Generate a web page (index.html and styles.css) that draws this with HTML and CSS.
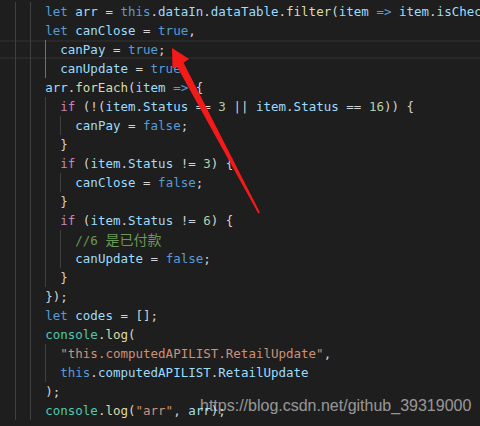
FILE: index.html
```html
<!DOCTYPE html>
<html lang="en">
<head>
    <meta charset="UTF-8">
    <title>canClose / canPay</title>
    <link rel="stylesheet" href="styles.css">
</head>
<body>

    <div class="editor">
        <div class="ln"><span class="ig0">  </span><span class="ig">  </span><span class="ig">  </span><span class="kw">let</span> <span class="vr">arr</span> = <span class="kw">this</span>.<span class="vr">dataIn</span>.<span class="vr">dataTable</span>.<span class="fn">filter</span>(<span class="vr">item</span> <span class="kw">=&gt;</span> <span class="vr">item</span>.<span class="vr">isChecked</span>);</div>
        <div class="ln"><span class="ig0">  </span><span class="ig">  </span><span class="ig">  </span><span class="kw">let</span> <span class="vr">canClose</span> = <span class="kw">true</span>,</div>
        <div class="ln cur"><span class="ig0">  </span><span class="ig">  </span><span class="ig">  </span><span class="ig on">  </span><span class="vr">canPay</span> = <span class="kw">true</span>;</div>
        <div class="ln"><span class="ig0">  </span><span class="ig">  </span><span class="ig">  </span><span class="ig on">  </span><span class="vr">canUpdate</span> = <span class="kw">true</span>;</div>
        <div class="ln"><span class="ig0">  </span><span class="ig">  </span><span class="ig">  </span><span class="vr">arr</span>.<span class="fn">forEach</span>(<span class="vr">item</span> <span class="kw">=&gt;</span> {</div>
        <div class="ln"><span class="ig0">  </span><span class="ig">  </span><span class="ig">  </span><span class="ig">  </span><span class="ct">if</span> (!(<span class="vr">item</span>.<span class="vr">Status</span> == <span class="nm">3</span> || <span class="vr">item</span>.<span class="vr">Status</span> == <span class="nm">16</span>)) {</div>
        <div class="ln"><span class="ig0">  </span><span class="ig">  </span><span class="ig">  </span><span class="ig">  </span><span class="ig">  </span><span class="vr">canPay</span> = <span class="kw">false</span>;</div>
        <div class="ln"><span class="ig0">  </span><span class="ig">  </span><span class="ig">  </span><span class="ig">  </span>}</div>
        <div class="ln"><span class="ig0">  </span><span class="ig">  </span><span class="ig">  </span><span class="ig">  </span><span class="ct">if</span> (<span class="vr">item</span>.<span class="vr">Status</span> != <span class="nm">3</span>) {</div>
        <div class="ln"><span class="ig0">  </span><span class="ig">  </span><span class="ig">  </span><span class="ig">  </span><span class="ig">  </span><span class="vr">canClose</span> = <span class="kw">false</span>;</div>
        <div class="ln"><span class="ig0">  </span><span class="ig">  </span><span class="ig">  </span><span class="ig">  </span>}</div>
        <div class="ln"><span class="ig0">  </span><span class="ig">  </span><span class="ig">  </span><span class="ig">  </span><span class="ct">if</span> (<span class="vr">item</span>.<span class="vr">Status</span> != <span class="nm">6</span>) {</div>
        <div class="ln"><span class="ig0">  </span><span class="ig">  </span><span class="ig">  </span><span class="ig">  </span><span class="ig">  </span><span class="cm">//6 <span class="cjk">是已付款</span></span></div>
        <div class="ln"><span class="ig0">  </span><span class="ig">  </span><span class="ig">  </span><span class="ig">  </span><span class="ig">  </span><span class="vr">canUpdate</span> = <span class="kw">false</span>;</div>
        <div class="ln"><span class="ig0">  </span><span class="ig">  </span><span class="ig">  </span><span class="ig">  </span>}</div>
        <div class="ln"><span class="ig0">  </span><span class="ig">  </span><span class="ig">  </span>});</div>
        <div class="ln"><span class="ig0">  </span><span class="ig">  </span><span class="ig">  </span><span class="kw">let</span> <span class="vr">codes</span> = [];</div>
        <div class="ln"><span class="ig0">  </span><span class="ig">  </span><span class="ig">  </span><span class="cl">console</span>.<span class="fn">log</span>(</div>
        <div class="ln"><span class="ig0">  </span><span class="ig">  </span><span class="ig">  </span><span class="ig">  </span><span class="st">"this.computedAPILIST.RetailUpdate"</span>,</div>
        <div class="ln"><span class="ig0">  </span><span class="ig">  </span><span class="ig">  </span><span class="ig">  </span><span class="kw">this</span>.<span class="vr">computedAPILIST</span>.<span class="vr">RetailUpdate</span></div>
        <div class="ln"><span class="ig0">  </span><span class="ig">  </span><span class="ig">  </span>);</div>
        <div class="ln"><span class="ig0">  </span><span class="ig">  </span><span class="ig">  </span><span class="cl">console</span>.<span class="fn">log</span>(<span class="st">"arr"</span>, <span class="vr">arr</span>);</div>
    </div>

    <!-- red annotation arrow -->
    <svg class="arrow" width="480" height="426" viewBox="0 0 480 426">
        <polygon fill="#f51a1a" points="172,48 189,59 183.5,62.8 259.9,212.6 258.3,213.4 177,66.6 172.5,68.5"/>
    </svg>

    <div class="watermark">https://blog.csdn.net/github_39319000</div>

</body>
</html>
```

FILE: styles.css
```css
body {
    margin: 0;
    padding: 0;
    background: #1e1e1e;
    width: 480px;
    height: 426px;
    overflow: hidden;
    position: relative;
}

.editor {
    padding-top: 2px;
    font-family: 'DejaVu Sans Mono', 'Liberation Mono', monospace;
    font-size: 12.5px;
    line-height: 19px;
    color: #d4d4d4;
}

.ln {
    height: 19px;
    white-space: pre;
    overflow: hidden;
}

/* current line */
.cur {
    box-shadow: inset 0 2px 0 #282828, inset 0 -2px 0 #282828;
}

/* indent guides */
.ig0,
.ig {
    display: inline-block;
    height: 19px;
    vertical-align: top;
}

.ig {
    box-shadow: inset 1px 0 0 #404040;
}

.ig.on {
    box-shadow: inset 1px 0 0 #707070;
}

/* tokens */
.kw { color: #569cd6; }
.vr { color: #9cdcfe; }
.fn { color: #dcdcaa; }
.ct { color: #c586c0; }
.nm { color: #b5cea8; }
.st { color: #ce9178; }
.cm { color: #6a9955; }
.cl { color: #4ec9b0; }

.cjk {
    font-family: 'Noto Sans CJK SC', sans-serif;
    font-size: 14px;
}

.arrow {
    position: absolute;
    left: 0;
    top: 0;
}

.watermark {
    position: absolute;
    left: 200px;
    top: 396px;
    font-family: 'Liberation Sans', Arial, sans-serif;
    font-size: 16px;
    line-height: 20px;
    color: rgba(255, 255, 255, 0.55);
}
```
